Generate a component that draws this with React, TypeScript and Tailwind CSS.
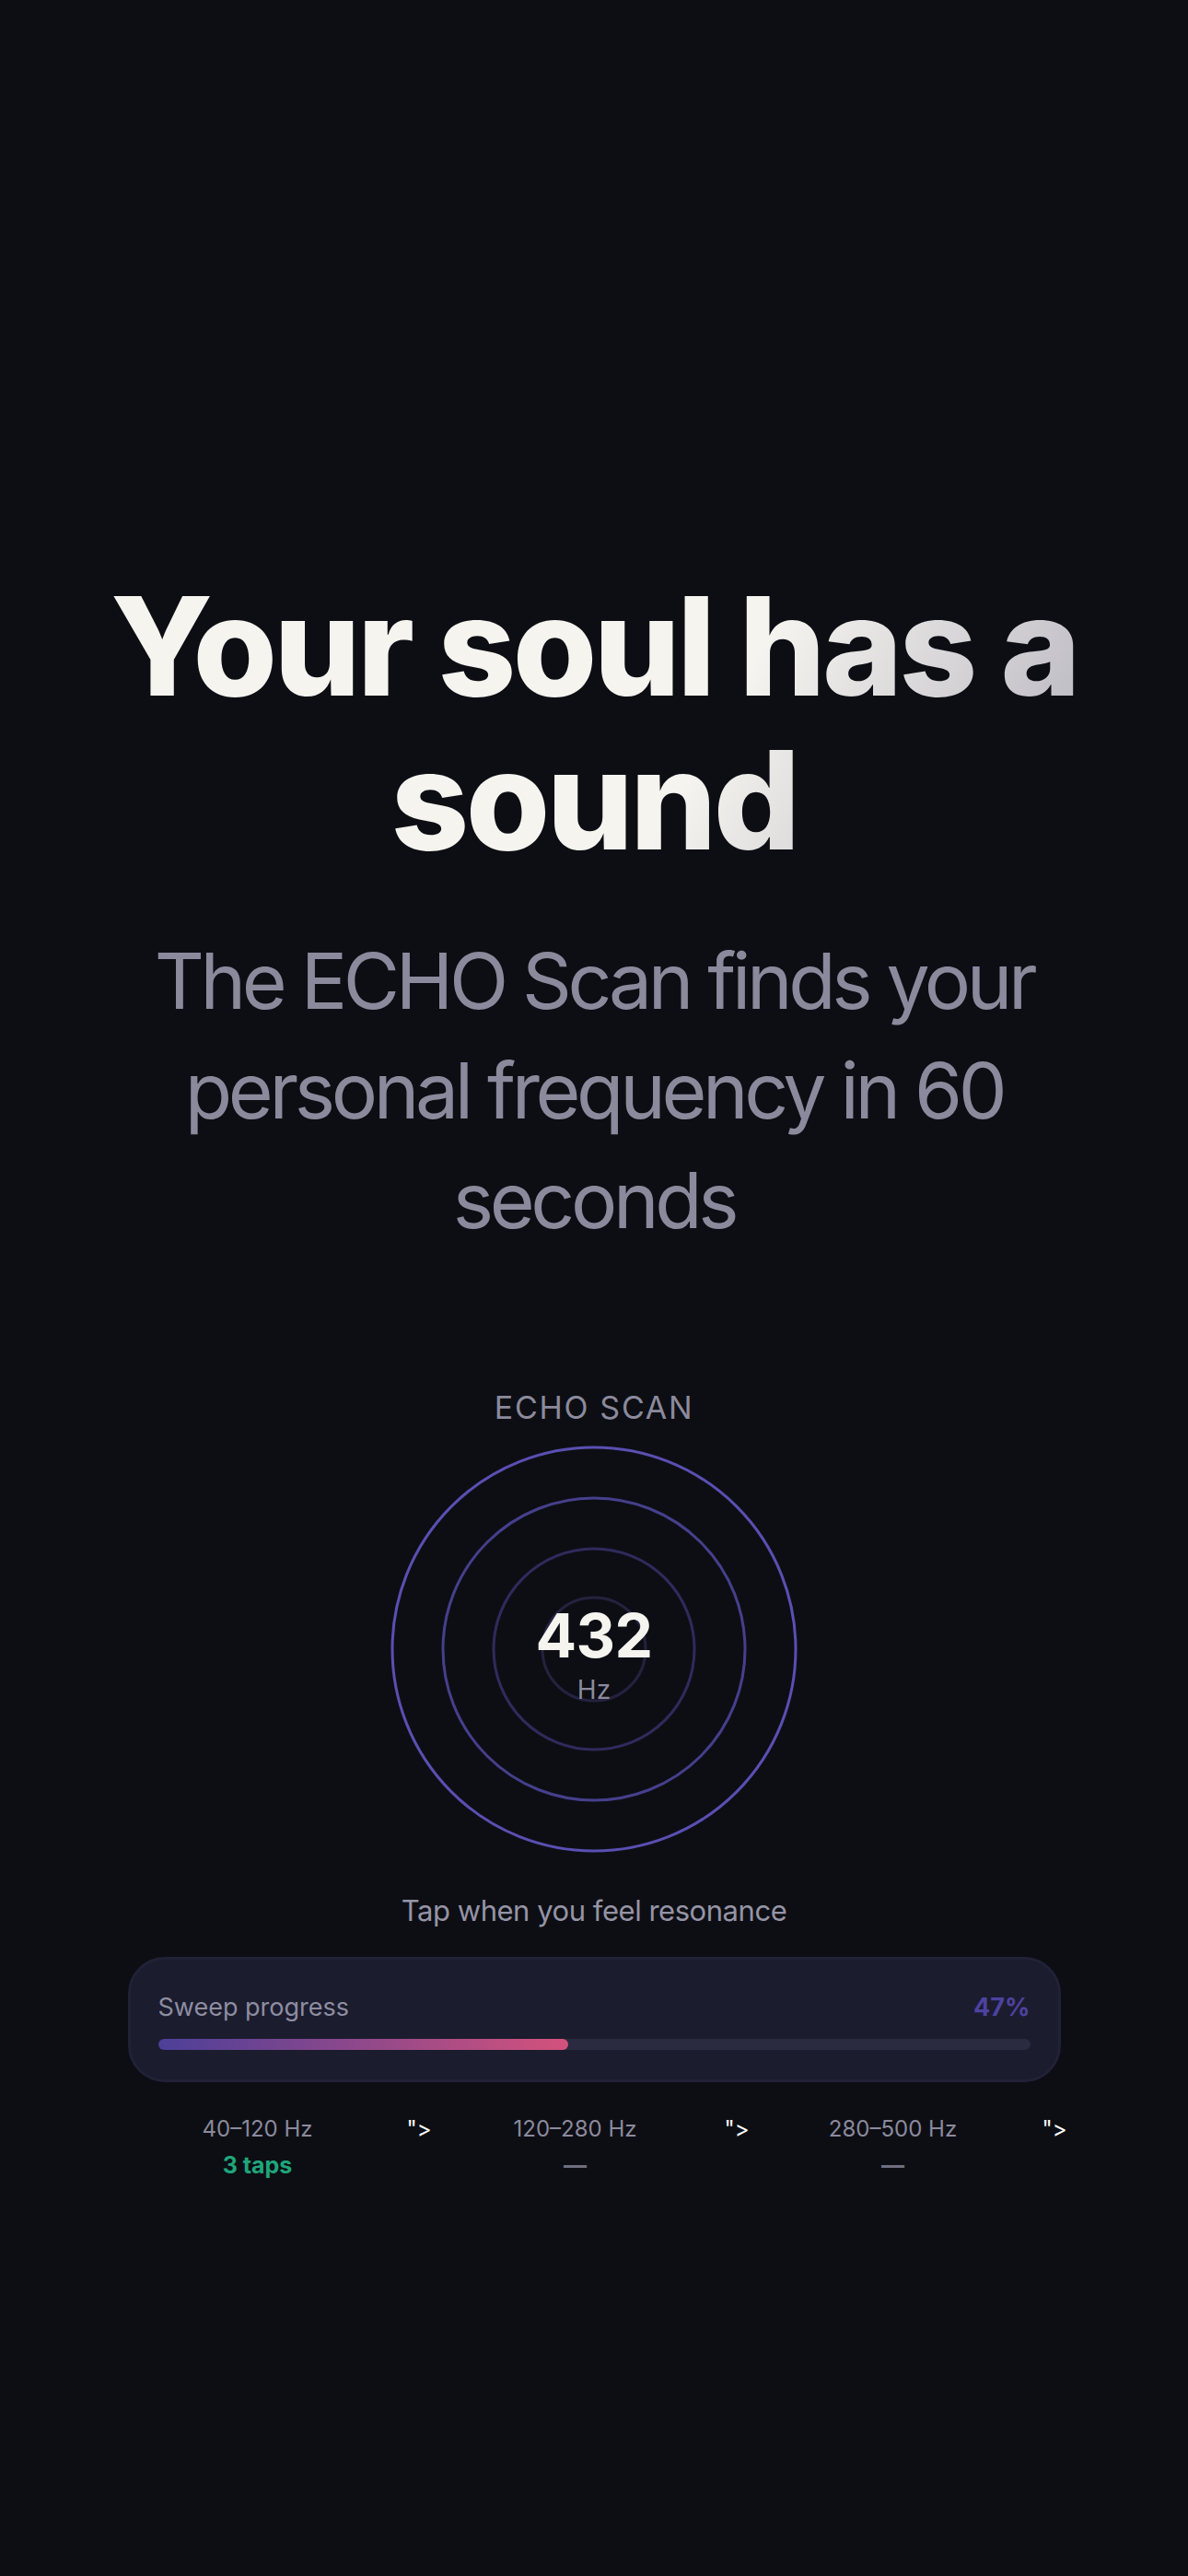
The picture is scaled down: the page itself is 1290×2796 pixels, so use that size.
import React from "react";

const bands = [
  { range: "40–120 Hz", taps: "3 taps", active: true },
  { range: "120–280 Hz", taps: "—", active: false },
  { range: "280–500 Hz", taps: "—", active: false },
];

const rings = [
  { r: 219, color: "#5a4fb2" },
  { r: 164, color: "#463f8c" },
  { r: 109, color: "#2f2b5c" },
  { r: 56, color: "#25223f" },
];

const EchoRings = () => (
  <div className="relative w-[442px] h-[442px]">
    <svg width="442" height="442" viewBox="0 0 442 442" className="block">
      {rings.map((ring) => (
        <circle key={ring.r} cx="221" cy="221" r={ring.r} fill="none" stroke={ring.color} strokeWidth="3" />
      ))}
    </svg>
    <div className="absolute inset-0 flex flex-col items-center justify-center pt-[14px]">
      <span className="text-[66px] leading-[66px] font-bold text-[#f5f4ef] tracking-[-0.01em]">432</span>
      <span className="text-[28px] leading-[36px] text-[#8b8a9c] mt-[8px]">Hz</span>
    </div>
  </div>
);

const App = () => {
  const progress = 47;

  return (
    <main
      className="min-h-[2796px] w-full bg-[#0d0e14] flex flex-col items-center pt-[618px]"
      style={{ fontFamily: "Inter, 'Noto Sans', sans-serif" }}
    >
      <h1 className="w-[1146px] text-center text-[148px] leading-[167px] font-extrabold tracking-[-0.024em] bg-[linear-gradient(120deg,#f5f4ef_0%,#f5f4ef_60%,#a9a7b4_100%)] bg-clip-text text-transparent">
        Your soul has a sound
      </h1>

      <p className="w-[1010px] mt-[53px] text-center text-[84px] leading-[119px] text-[#8b8a9c] tracking-[-0.052em]">
        The ECHO Scan finds your personal frequency in 60 seconds
      </p>

      <div className="mt-[141px] text-[34px] leading-[50px] tracking-[0.05em] text-[#8b8a9c] uppercase">
        Echo Scan
      </div>

      <div className="mt-[16px]">
        <EchoRings />
      </div>

      <p className="mt-[40px] text-[31px] leading-[45px] text-[#9594a5] tracking-[-0.015em]">
        Tap when you feel resonance
      </p>

      <div className="mt-[28px] w-[1013px] rounded-[40px] border-[3px] border-[#212137] bg-[#1b1c2e] px-[30px] py-[32px]">
        <div className="flex items-center justify-between h-[40px]">
          <span className="text-[27px] text-[#8e8da0]">Sweep progress</span>
          <span className="text-[27px] font-bold text-[#4d42a0]">{progress}%</span>
        </div>
        <div className="mt-[14px] h-[12px] w-full rounded-full bg-[#2a2a40] overflow-hidden">
          <div
            className="h-full rounded-full bg-[linear-gradient(90deg,#4c3f99,#d4527c)]"
            style={{ width: `${progress}%` }}
          />
        </div>
      </div>

      <div className="mt-[33px] w-[1013px]">
        <div className="flex w-[1035px] -ml-[21px]">
          {bands.map((band) => (
            <div key={band.range} className="flex-1 flex items-start">
              <div className="flex-1 flex flex-col items-center">
                <span className="text-[24px] leading-[36px] text-[#8b8a9c]">{band.range}</span>
                <span
                  className={`text-[25px] leading-[36px] font-bold mt-[3px] ${
                    band.active ? "text-[#1fa67a]" : "text-[#6f6e80]"
                  }`}
                >
                  {band.taps}
                </span>
              </div>
              <span className="w-[21px] text-[24px] leading-[36px] text-white">"&gt;</span>
            </div>
          ))}
        </div>
      </div>
    </main>
  );
};

export default App;
